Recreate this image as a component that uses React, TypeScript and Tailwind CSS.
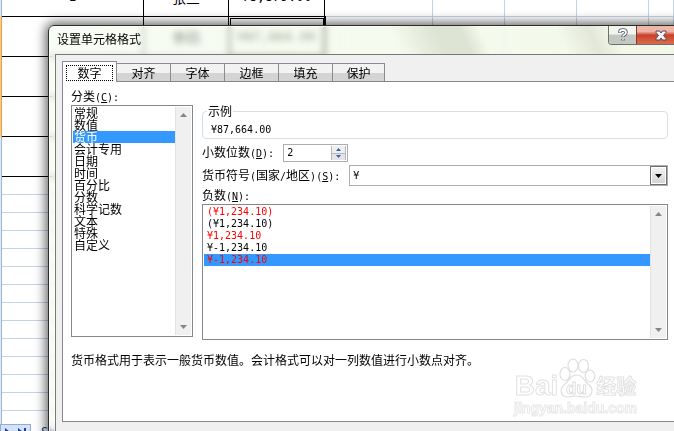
import React, { useState } from 'react';

const tabs = ['数字', '对齐', '字体', '边框', '填充', '保护'];

const categories = [
  '常规',
  '数值',
  '货币',
  '会计专用',
  '日期',
  '时间',
  '百分比',
  '分数',
  '科学记数',
  '文本',
  '特殊',
  '自定义',
];

const negatives = [
  { label: '(¥1,234.10)', red: true },
  { label: '(¥1,234.10)', red: false },
  { label: '¥1,234.10', red: true },
  { label: '¥-1,234.10', red: false },
  { label: '¥-1,234.10', red: true },
];

// Rows of the table that has data and black borders
const records = [
  ['1', '张三', '¥8,879.00'],
  ['', '李四', '¥87,664.00'],
  ['', '', ''],
  ['', '', ''],
  ['', '', ''],
];

const Mono = ({ children }: { children: React.ReactNode }) => (
  <span className="font-['DejaVu_Sans_Mono',monospace] text-[10px]">{children}</span>
);

// Shortcut key after a label, e.g. (C):
const Key = ({ letter }: { letter: string }) => (
  <Mono>
    (<u>{letter}</u>):
  </Mono>
);

const ScrollBar = () => (
  <div className="flex w-4 shrink-0 flex-col items-center justify-between border-l border-[#e3e3e3] bg-[#f0f0f0] py-[6px]">
    <svg width="7" height="4" viewBox="0 0 7 4">
      <path d="M0 4L3.5 0L7 4Z" fill="#868686" />
    </svg>
    <svg width="7" height="4" viewBox="0 0 7 4">
      <path d="M0 0L3.5 4L7 0Z" fill="#868686" />
    </svg>
  </div>
);

const Sheet = () => (
  <div className="flex h-full flex-col bg-white">
    <div className="min-h-0 flex-1 overflow-hidden">
      <table className="-mt-[23px] w-full table-fixed border-separate border-spacing-0 text-center">
        <colgroup>
          <col className="w-[2px]" />
          <col className="w-[142px]" />
          <col className="w-[85px]" />
          <col className="w-[96px]" />
          <col className="w-[108px]" />
          <col className="w-[72px]" />
          <col className="w-[72px]" />
          <col className="w-[72px]" />
          <col />
        </colgroup>
        <tbody>
          {records.map((row, i) => (
            <tr key={i} className="h-10">
              <td className={i > 0 && i < 4 ? 'border-r border-[#f29b3a] bg-[#fbcf8e] p-0' : 'border-r border-[#9db8d6] bg-[#dfe9f5] p-0'} />
              {row.map((cell, j) => (
                <td
                  key={j}
                  className={
                    i === 1 && j === 2
                      ? 'border-r border-b border-black p-0 outline-3 -outline-offset-2 outline-double outline-black'
                      : 'border-r border-b border-black p-0'
                  }
                >
                  <span className={j === 1 ? 'text-sm' : "font-['DejaVu_Sans_Mono',monospace] text-[13px]"}>{cell}</span>
                </td>
              ))}
              {[0, 1, 2, 3, 4].map((j) => (
                <td key={j} className="border-r border-b border-[#c5d3e8] p-0" />
              ))}
            </tr>
          ))}
          {Array.from({ length: 14 }, (_, i) => (
            <tr key={i} className="h-[18px]">
              <td className="border-r border-[#9db8d6] bg-[#dfe9f5] p-0" />
              {Array.from({ length: 8 }, (_, j) => (
                <td key={j} className="border-b border-[#c5d3e8] p-0" />
              ))}
            </tr>
          ))}
        </tbody>
      </table>
    </div>
    <div className="flex h-[7px] shrink-0 gap-[10px] overflow-hidden bg-white text-[#1f3f8f]">
      <div className="flex h-4 w-[31px] items-start gap-2 border border-[#8fabd6] bg-[#d3e2f6] pt-[3px] pl-1">
        <svg width="5" height="8" viewBox="0 0 5 8" fill="currentColor">
          <path d="M0 0L5 4L0 8Z" />
        </svg>
        <svg width="8" height="8" viewBox="0 0 8 8" fill="currentColor">
          <path d="M0 0L5 4L0 8ZM6 0H8V8H6Z" />
        </svg>
      </div>
      <span className="font-['DejaVu_Sans_Mono',monospace] text-xs leading-4">Sheet1</span>
    </div>
  </div>
);

const Watermark = () => (
  <div className="pointer-events-none absolute top-[358px] right-[37px] flex flex-col items-center text-white select-none">
    <div className="flex items-end font-['Liberation_Sans',sans-serif] text-[28px] leading-6 font-bold">
      <span className="[-webkit-text-stroke:1px_#e2e2e2]">Bai</span>
      <svg width="38" height="40" viewBox="0 0 38 40" fill="#fff" stroke="#dedede" strokeWidth="1.2">
        <ellipse cx="7" cy="16" rx="5" ry="6.5" />
        <ellipse cx="15" cy="7.5" rx="5" ry="6.5" />
        <ellipse cx="25.5" cy="8" rx="5" ry="6.5" />
        <ellipse cx="32" cy="18" rx="4.8" ry="6" />
        <path d="M19 17C25 17 26 23 30 26C37 31 34 39 27 39C22 39 21 38 18 38C15 38 14 39 10 39C2 39 1 31 7 26C12 22 12 17 19 17Z" />
        <text x="18.5" y="36" textAnchor="middle" fontSize="17" strokeWidth="0.9">
          du
        </text>
      </svg>
      <span className="font-['Noto_Sans_CJK_SC',sans-serif] text-xl leading-6 [-webkit-text-stroke:1px_#e2e2e2]">经验</span>
    </div>
    <span className="font-['Liberation_Sans',sans-serif] text-sm leading-5 font-bold [-webkit-text-stroke:1px_#e8e8e8]">
      jingyan.baidu.com
    </span>
  </div>
);

export default function App() {
  const [tab, setTab] = useState(0);
  const [category, setCategory] = useState('货币');
  const [negative, setNegative] = useState('4');
  const [decimals, setDecimals] = useState(2);

  return (
    <div className="relative h-screen w-full overflow-hidden font-['Noto_Sans_CJK_SC',sans-serif] text-xs leading-3 text-black">
      <Sheet />

      <div className="absolute top-[25px] -right-4 left-12 rounded-t-md border border-[#2b2f2b] bg-linear-to-r from-[#f1faea]/50 to-[#f1f8e6]/90 px-[6px] shadow-[0_0_12px_2px_rgba(0,0,0,0.65)] ring-1 ring-white/60 backdrop-blur-[3px] ring-inset">
        <div className="flex h-7 items-start justify-between bg-[linear-gradient(65deg,transparent_54%,#dde4d3_61%,#dde4d3_65%,transparent_68%,transparent_80%,#e2e7d9_85%,transparent_89%)]">
          <h1 className="pt-[7px] pl-[2px]">设置单元格格式</h1>
          <div className="-mr-[3px] flex h-[19px] overflow-hidden rounded-b border border-t-0 border-[#6c716c]">
            <button aria-label="帮助" className="flex w-7 items-center justify-center border-r border-[#7c3b34] bg-linear-to-b from-[#f2f5ee] from-45% to-[#c3c9c0] to-50%">
              <svg width="10" height="14" viewBox="0 0 10 14" fill="none">
                <path d="M2 5V3.5Q2 2 5 2Q8 2 8 4.5Q8 6 6.5 6.8Q5 7.5 5 9M5 11V12.5" stroke="#4e5264" strokeWidth="3.4" />
                <path d="M2 4.5V3.5Q2 2 5 2Q8 2 8 4.5Q8 6 6.5 6.8Q5 7.5 5 8.6M5 11.2V12.3" stroke="#fff" strokeWidth="1.8" />
              </svg>
            </button>
            <button aria-label="关闭" className="flex w-12 items-center justify-center bg-linear-to-b from-[#efb5a8] from-30% via-[#c8402a] via-50% to-[#dd6b4c]">
              <svg width="12" height="11" viewBox="0 0 12 11">
                <path d="M1 1H4.5L6 3L7.5 1H11V2.5L8.5 5.5L11 8.5V10H7.5L6 8L4.5 10H1V8.5L3.5 5.5L1 2.5Z" fill="#f4f4f4" stroke="#4e4d60" />
              </svg>
            </button>
          </div>
        </div>

        <div className="border border-[#777b77] bg-[#f0f0f0] px-[6px] pt-[6px] pb-12">
          <div className="flex items-end" role="tablist">
            {tabs.map((name, i) => (
              <button
                key={name}
                role="tab"
                aria-selected={tab === i}
                onClick={() => setTab(i)}
                className={
                  tab === i
                    ? '-mb-px h-[21px] w-[55px] border border-b-0 border-[#898c95] bg-white p-[3px]'
                    : 'h-[18px] w-[54px] border border-b-0 border-l-0 border-[#898c95] bg-linear-to-b from-[#f2f2f2] from-50% to-[#d4d4d4] to-55% last:w-[52px]'
                }
              >
                <span className={tab === i ? 'block border border-dotted border-black leading-[14px]' : 'block leading-3'}>{name}</span>
              </button>
            ))}
          </div>

          <div className="border border-[#828790] bg-white pt-2 pr-[7px] pb-[55px] pl-2">
            <div className="flex items-start gap-[9px]">
              <div className="flex w-[122px] shrink-0 flex-col gap-[3px]">
                <label htmlFor="category" className="h-3">
                  分类
                  <Key letter="C" />
                </label>
                <div className="flex h-[232px] border border-[#828790] p-px">
                  <select
                    id="category"
                    size={12}
                    value={category}
                    onChange={(e) => setCategory(e.target.value)}
                    className="min-w-0 flex-1 overflow-hidden outline-none"
                  >
                    {categories.map((name) => (
                      <option
                        key={name}
                        value={name}
                        className="flex h-3 min-h-0 items-center overflow-visible p-0 pb-px pl-px leading-3 checked:bg-[linear-gradient(#3399ff,#3399ff)] checked:text-white"
                      >
                        {name}
                      </option>
                    ))}
                  </select>
                  <ScrollBar />
                </div>
              </div>

              <div className="min-w-0 flex-1 pt-[15px]">
                <fieldset className="h-[34px] rounded border border-[#d5dfe5] px-2">
                  <legend className="-ml-1 px-px">示例</legend>
                  <p className="pt-[5px]">
                    <Mono>¥87,664.00</Mono>
                  </p>
                </fieldset>

                <div className="mt-[5px] flex items-center gap-[9px]">
                  <label htmlFor="decimals">
                    小数位数
                    <Key letter="D" />
                  </label>
                  <div className="flex h-[18px] w-[65px] border border-[#abadb3] p-px">
                    <input
                      id="decimals"
                      type="text"
                      value={decimals}
                      onChange={(e) => setDecimals(Number(e.target.value) || 0)}
                      className="min-w-0 flex-1 pl-[2px] font-['DejaVu_Sans_Mono',monospace] text-[10px] outline-none"
                    />
                    <div className="flex w-[15px] flex-col gap-px bg-[#b4b6ba] px-px">
                      <button aria-label="增加" onClick={() => setDecimals(decimals + 1)} className="flex flex-1 items-center justify-center bg-[#efefef]">
                        <svg width="5" height="3" viewBox="0 0 5 3">
                          <path d="M0 3L2.5 0L5 3Z" fill="#3c5dab" />
                        </svg>
                      </button>
                      <button aria-label="减少" onClick={() => setDecimals(Math.max(0, decimals - 1))} className="flex flex-1 items-center justify-center bg-[#e4e4e4]">
                        <svg width="5" height="3" viewBox="0 0 5 3">
                          <path d="M0 0L2.5 3L5 0Z" fill="#3c5dab" />
                        </svg>
                      </button>
                    </div>
                  </div>
                </div>

                <div className="mt-[3px] flex items-center gap-[9px]">
                  <label htmlFor="symbol" className="shrink-0">
                    货币符号<Mono>(</Mono>国家<Mono>/</Mono>地区<Mono>)</Mono>
                    <Key letter="S" />
                  </label>
                  <div className="flex h-[21px] min-w-0 flex-1 border border-[#abadb3]">
                    <select id="symbol" className="min-w-0 flex-1 appearance-none pl-[3px] font-['DejaVu_Sans_Mono',monospace] text-[10px] outline-none">
                      <option>¥</option>
                    </select>
                    <div className="flex w-[17px] items-center justify-center border border-[#707070] bg-linear-to-b from-[#f4f4f4] to-[#d2d2d2] ring-1 ring-white ring-inset">
                      <svg width="7" height="4" viewBox="0 0 7 4">
                        <path d="M0 0L3.5 4L7 0Z" />
                      </svg>
                    </div>
                  </div>
                </div>

                <label htmlFor="negative" className="mt-[3px] block h-3">
                  负数
                  <Key letter="N" />
                </label>
                <div className="mt-[3px] flex h-[136px] border border-[#828790] p-px">
                  <select
                    id="negative"
                    size={5}
                    value={negative}
                    onChange={(e) => setNegative(e.target.value)}
                    className="min-w-0 flex-1 overflow-hidden font-['DejaVu_Sans_Mono',monospace] text-[10px] outline-none"
                  >
                    {negatives.map((item, i) => (
                      <option
                        key={i}
                        value={String(i)}
                        className={
                          item.red
                            ? 'h-3 min-h-0 p-0 pl-[3px] leading-3 text-[#ff0000] checked:bg-[linear-gradient(#3399ff,#3399ff)] checked:text-[#ff0000]'
                            : 'h-3 min-h-0 p-0 pl-[3px] leading-3 text-black checked:bg-[linear-gradient(#3399ff,#3399ff)] checked:text-black'
                        }
                      >
                        {item.label}
                      </option>
                    ))}
                  </select>
                  <ScrollBar />
                </div>
              </div>
            </div>

            <p className="mt-[14px]">货币格式用于表示一般货币数值。会计格式可以对一列数值进行小数点对齐。</p>
          </div>
        </div>
      </div>

      <Watermark />
    </div>
  );
}
